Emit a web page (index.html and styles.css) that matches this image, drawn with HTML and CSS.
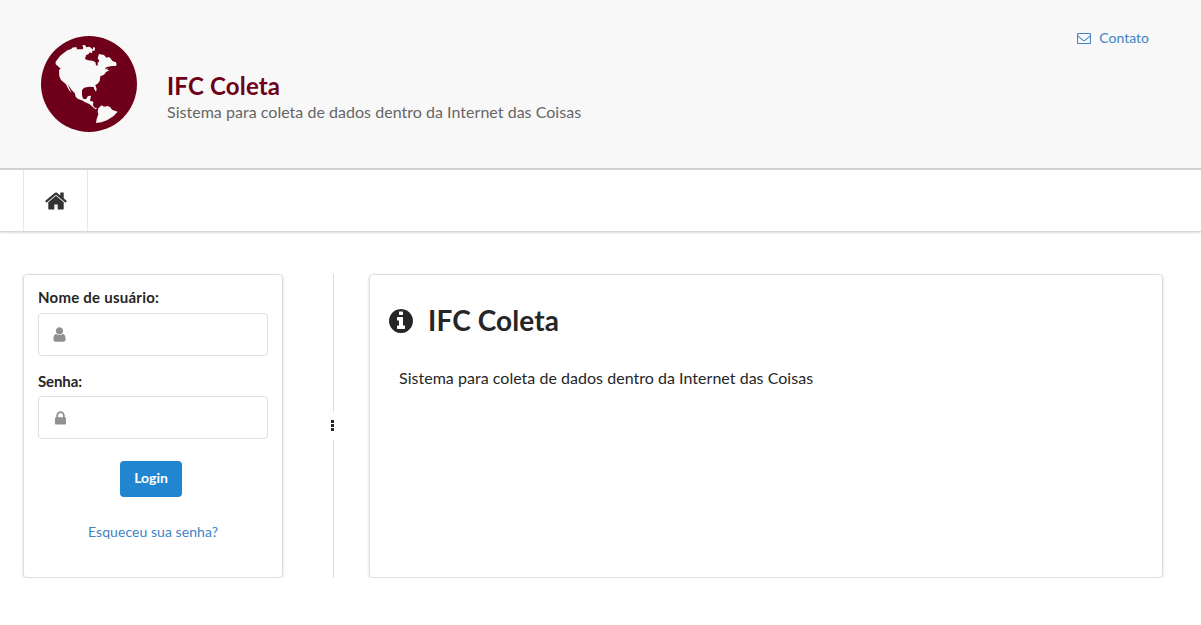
FILE: index.html
```html
<!DOCTYPE html>
<html lang="pt-BR">
<head>
<meta charset="utf-8">
<title>IFC Coleta</title>
<link rel="stylesheet" href="styles.css">
</head>
<body>
<header class="header">
  <svg class="globe" viewBox="33 33 288 288" aria-hidden="true">
    <circle cx="177" cy="177" r="144" fill="#6e0019"/>
    <path fill="#f8f8f8" d="M77 110L90 93L102 83L112 76L124 72L126 68L139 66L141 73L157 73L160 70L157 61L165 60L169 67L178 65L184 69L188 74L190 66L195 68L194 77L187 77L186 85L179 82L176 87L168 91L165 102L174 106L187 107L196 111L198 121L203 122L203 113L208 108L203 100L207 87L222 90L229 98L236 96L241 99L247 108L258 112L260 119L257 123L245 123L228 127L225 134L233 129L232 135L239 136L229 140L222 149L211 154L209 168L203 176L196 180L200 193L198 200L193 193L191 186L178 185L162 188L156 196L156 211L159 221L168 223L174 213L183 212L180 227L190 230L189 241L194 248L202 249L196 253L186 244L178 237L164 231L159 227L143 221L137 215L134 204L124 194L114 178L118 190L124 203L117 196L108 178L93 165L88 154L87 135L92 131L84 124L77 118Z"/>
    <path fill="#f8f8f8" d="M205 250L215 241L222 245L233 243L241 247L246 254L263 260L251 273L231 286L214 292L198 294L200 282L205 268L203 260Z"/>
  </svg>
  <div class="brand">
    <div class="brand-title">IFC Coleta</div>
    <div class="brand-sub">Sistema para coleta de dados dentro da Internet das Coisas</div>
  </div>
  <a class="contact">
    <svg class="icon-mail" viewBox="0 0 1792 1792" aria-hidden="true"><path d="M1664 1504v-768q-32 36-69 66-268 206-426 338-51 43-83 67t-86.500 48.500-102.500 24.500h-2q-48 0-102.500-24.500t-86.500-48.500-83-67q-158-132-426-338-37-30-69-66v768q0 13 9.500 22.500t22.500 9.500h1472q13 0 22.500-9.500t9.500-22.500zm0-1051v-24.500l-.5-13-3-12.500-5.500-9-9-7.500-14-2.500h-1472q-13 0-22.500 9.500t-9.500 22.500q0 168 147 284 193 152 401 317 6 5 35 29.500t46 37.500 44.500 31.500 50.500 27.500 43 9h2q20 0 43-9t50.500-27.500 44.500-31.500 46-37.500 35-29.500q208-165 401-317 54-43 100.500-115.500t46.500-131.500zm128-37v1088q0 66-47 113t-113 47h-1472q-66 0-113-47t-47-113v-1088q0-66 47-113t113-47h1472q66 0 113 47t47 113z"/></svg>
    <span>Contato</span>
  </a>
</header>
<nav class="nav">
  <a class="nav-item" aria-label="Início">
    <svg class="icon-home" viewBox="0 0 1792 1792"><path d="M1472 992v480q0 26-19 45t-45 19h-384v-384h-256v384h-384q-26 0-45-19t-19-45v-480q0-1 .5-3t.5-3l575-474 575 474q1 2 1 6zm223-69l-62 74q-8 9-21 11h-3q-13 0-21-7l-692-577-692 577q-12 8-24 7-13-2-21-11l-62-74q-8-10-7-23.500t11-21.500l719-599q32-26 76-26t76 26l244 204v-195q0-14 9-23t23-9h192q14 0 23 9t9 23v408l219 182q10 8 11 21.500t-7 23.500z"/></svg>
  </a>
</nav>
<main class="main">
  <form class="card login">
    <label class="label" for="user">Nome de usuário:</label>
    <div class="field">
      <svg class="icon-field" viewBox="0 0 1792 1792" aria-hidden="true"><path d="M1536 1399q0 109-62.500 187t-150.500 78h-854q-88 0-150.500-78t-62.500-187q0-85 8.500-160.500t31.500-152 58.500-131 94-89 134.500-34.500q131 128 313 128t313-128q76 0 134.500 34.500t94 89 58.500 131 31.500 152 8.500 160.500zm-256-887q0 159-112.500 271.500t-271.500 112.500-271.500-112.500-112.500-271.500 112.500-271.500 271.500-112.500 271.500 112.500 112.500 271.500z"/></svg>
      <input class="input" id="user" type="text">
    </div>
    <label class="label label-second" for="pass">Senha:</label>
    <div class="field">
      <svg class="icon-field icon-lock" viewBox="0 0 1792 1792" aria-hidden="true"><path d="M640 768h512v-192q0-106-75-181t-181-75-181 75-75 181v192zm832 96v576q0 40-28 68t-68 28h-960q-40 0-68-28t-28-68v-576q0-40 28-68t68-28h32v-192q0-184 132-316t316-132 316 132 132 316v192h32q40 0 68 28t28 68z"/></svg>
      <input class="input" id="pass" type="password">
    </div>
    <button class="button" type="button">Login</button>
    <a class="forgot">Esqueceu sua senha?</a>
  </form>
  <div class="divider">
    <span class="line"></span>
    <svg class="dots" viewBox="0 0 3 11" aria-hidden="true"><path d="M0 0h3v3H0zM0 4h3v3H0zM0 8h3v3H0z"/></svg>
    <span class="line"></span>
  </div>
  <section class="card info">
    <h1 class="info-title">
      <svg class="icon-info" viewBox="0 0 1792 1792" aria-hidden="true"><path d="M1152 1376v-160q0-14-9-23t-23-9h-96v-512q0-14-9-23t-23-9h-320q-14 0-23 9t-9 23v160q0 14 9 23t23 9h96v320h-96q-14 0-23 9t-9 23v160q0 14 9 23t23 9h448q14 0 23-9t9-23zm-128-896v-160q0-14-9-23t-23-9h-192q-14 0-23 9t-9 23v160q0 14 9 23t23 9h192q14 0 23-9t9-23zm640 416q0 209-103 385.500t-279.500 279.500-385.500 103-385.500-103-279.500-279.500-103-385.500 103-385.500 279.500-279.500 385.500-103 385.500 103 279.500 279.500 103 385.500z"/></svg>
      <span>IFC Coleta</span>
    </h1>
    <p class="info-text">Sistema para coleta de dados dentro da Internet das Coisas</p>
  </section>
</main>
</body>
</html>
```
FILE: styles.css
```css
* { box-sizing: border-box; }
body {
  margin: 0;
  background: #fff;
  color: #262626;
  font: 14px/20px Lato, "Liberation Sans", sans-serif;
}
svg { display: block; flex: none; fill: currentColor; }
.header {
  display: flex;
  align-items: flex-start;
  height: 168px;
  padding: 36px 52px 0 41px;
  background: #f8f8f8;
}
.globe { width: 96px; height: 96px; }
.brand { margin: 36px 0 0 30px; }
.brand-title { color: #6e0019; font-size: 24px; font-weight: 700; line-height: 28px; letter-spacing: .18px; }
.brand-sub { color: #666; font-size: 16px; line-height: 24px; letter-spacing: .028px; }
.contact {
  display: flex;
  align-items: center;
  gap: 8px;
  margin: -8px 0 0 auto;
  color: #4183c4;
}
.icon-mail { width: 14px; height: 14px; }
.nav {
  display: flex;
  height: 64px;
  padding-left: 23px;
  border-top: 2px solid #d0d0d0;
  border-bottom: 1px solid #d8d8d9;
  box-shadow: 0 1px 2px rgba(34, 36, 38, .15);
}
.nav-item {
  display: flex;
  justify-content: center;
  width: 65px;
  padding-top: 19px;
  border: solid #e8e8e8;
  border-width: 0 1px;
  color: #333;
}
.icon-home { width: 24px; height: 24px; }
.main { display: flex; height: 304px; margin: 42px 38px 0 23px; }
.card {
  border: 1px solid #dededf;
  border-radius: 4px;
  box-shadow: 0 1px 3px rgba(34, 36, 38, .18);
}
.login { display: flex; flex-direction: column; width: 260px; padding: 12px 14px 0; }
.label { font-size: 15px; font-weight: 700; line-height: 20px; letter-spacing: .24px; }
.label-second { margin-top: 15px; letter-spacing: -.1px; }
.field {
  display: flex;
  align-items: center;
  height: 43px;
  margin-top: 6px;
  padding-left: 12px;
  border: 1px solid #dededf;
  border-radius: 4px;
  color: #909090;
}
.label-second + .field { margin-top: 5px; }
.icon-field { width: 17px; height: 17px; }
.icon-lock { margin: 1px 0 0 1px; }
.input { flex: 1; min-width: 0; height: 38px; border: 0; outline: 0; background: none; }
.button {
  align-self: center;
  width: 62px;
  height: 36px;
  margin: 22px 4px 0 0;
  padding: 0 0 2px;
  border: 0;
  border-radius: 4px;
  background: #2185d0;
  color: #fff;
  font: 700 14px/14px Lato, sans-serif;
}
.forgot { align-self: center; margin-top: 25px; color: #4183c4; letter-spacing: .06px; }
.divider { display: flex; flex-direction: column; align-items: center; width: 86px; padding-left: 15px; }
.line { width: 1px; flex: 1; background: #dededf; }
.dots { width: 3px; height: 11px; margin: 8px 2px 9px 0; }
.info { flex: 1; padding: 27px 18px 0 17px; }
.info-title {
  display: flex;
  align-items: center;
  gap: 13px;
  margin: 0;
  font-size: 28px;
  line-height: 36px;
  letter-spacing: .1px;
}
.icon-info { width: 28px; height: 28px; margin-top: 2px; }
.info-text { margin: 28px 0 0 12px; font-size: 16px; line-height: 24px; letter-spacing: .028px; }
```
